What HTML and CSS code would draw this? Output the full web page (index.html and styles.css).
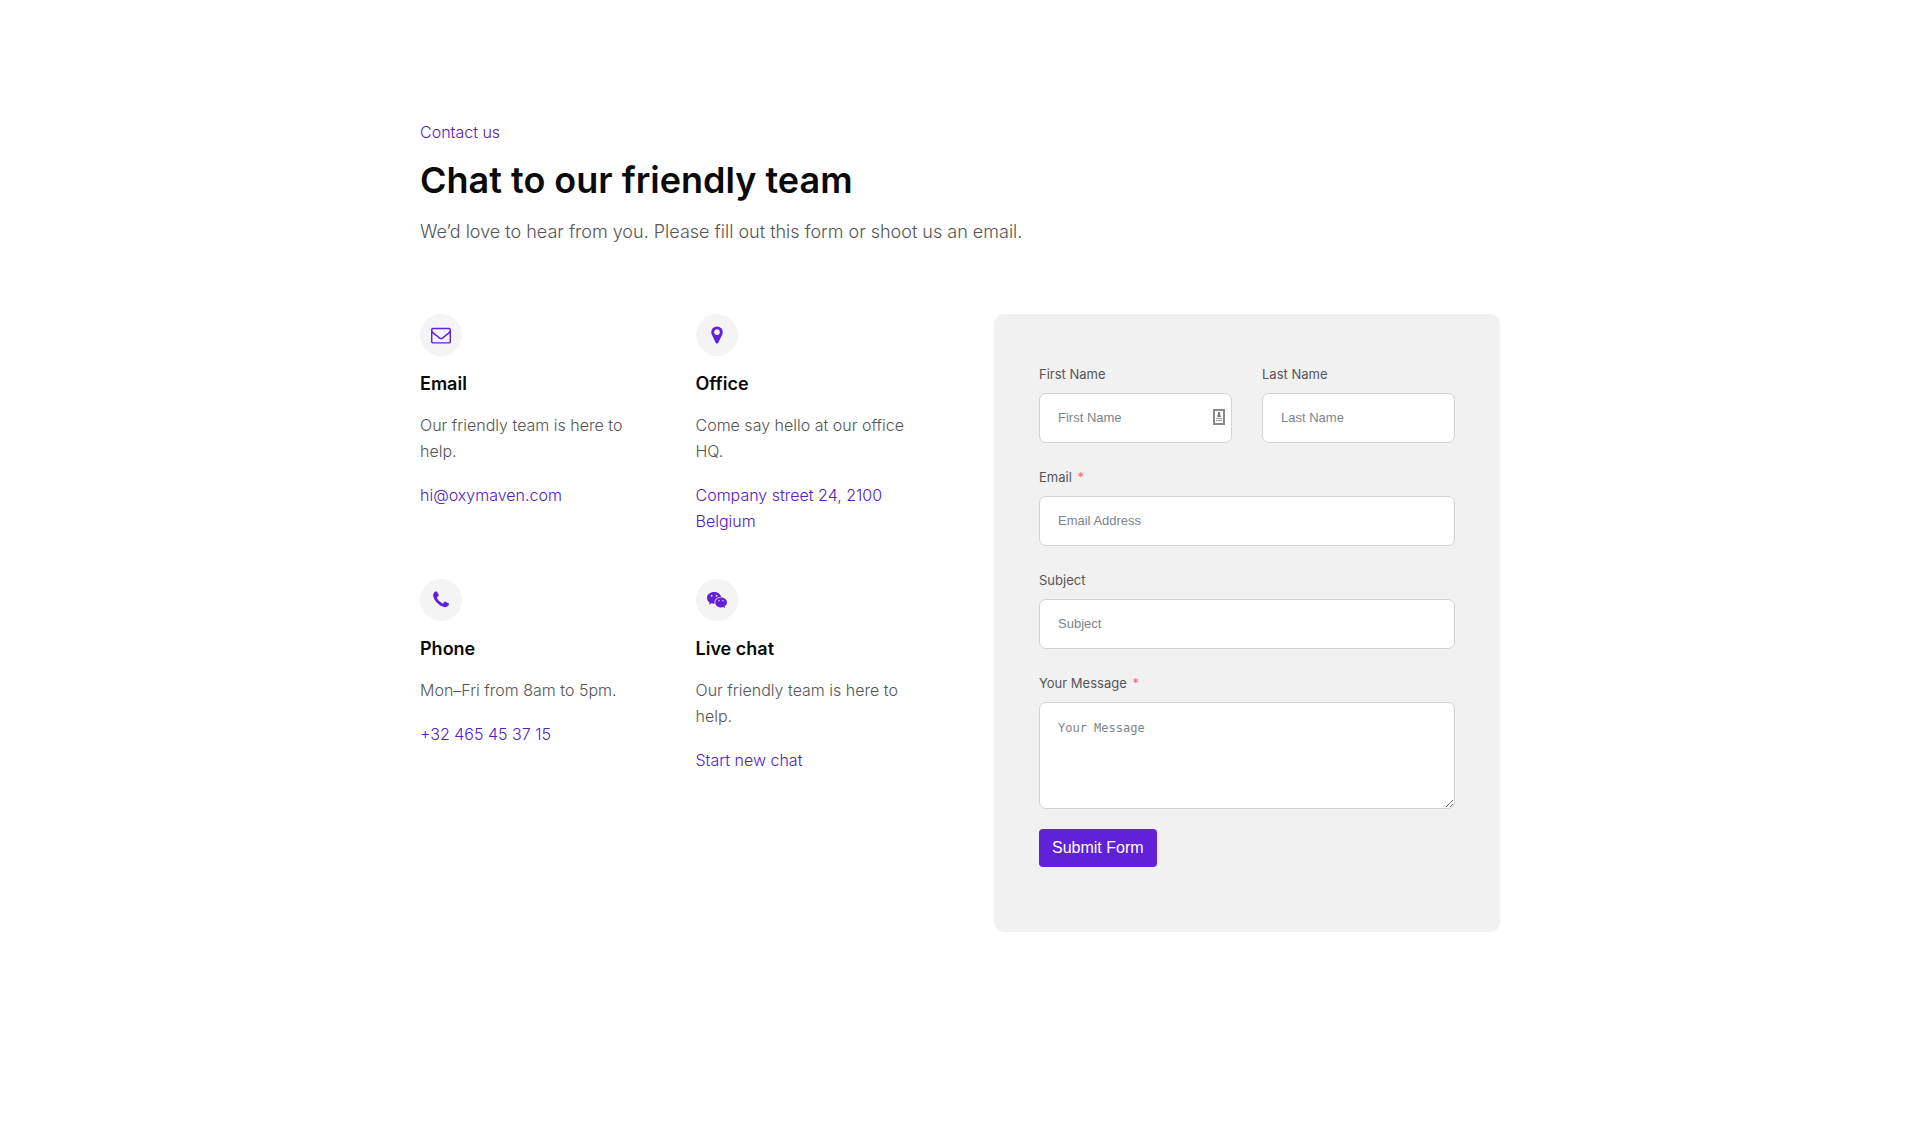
FILE: index.html
```html
<!DOCTYPE html>
<html lang="en">
<head>
<meta charset="utf-8">
<meta name="viewport" content="width=device-width, initial-scale=1">
<title>Contact us</title>
<link rel="stylesheet" href="styles.css">
</head>
<body>
<main class="container">
  <header class="intro">
    <p class="eyebrow">Contact us</p>
    <h1 class="title">Chat to our friendly team</h1>
    <p class="lead">We’d love to hear from you. Please fill out this form or shoot us an email.</p>
  </header>
  <div class="content">
    <section class="cards">
      <article class="card">
        <span class="icon"><svg viewBox="0 0 1792 1792" aria-hidden="true"><path d="M1664 1504v-768q-32 36-69 66-268 206-426 338-51 43-83 67t-86.5 48.5-102.5 24.5h-2q-48 0-102.5-24.5t-86.5-48.5-83-67q-158-132-426-338-37-30-69-66v768q0 13 9.5 22.5t22.5 9.5h1472q13 0 22.5-9.5t9.5-22.5zm0-1051v-24.5l-.5-13-3-12.5-5.5-9-9-7.5-14-2.5h-1472q-13 0-22.5 9.5t-9.5 22.5q0 168 147 284 193 152 401 317 6 5 35 29.5t46 37.5 44.5 31.5 50.5 27.5 43 9h2q20 0 43-9t50.5-27.5 44.5-31.5 46-37.5 35-29.5q208-165 401-317 54-43 100.5-115.5t46.5-131.5zm128-37v1088q0 66-47 113t-113 47h-1472q-66 0-113-47t-47-113v-1088q0-66 47-113t113-47h1472q66 0 113 47t47 113z"/></svg></span>
        <h2 class="card-title">Email</h2>
        <p class="card-text">Our friendly team is here to help.</p>
        <a class="card-link" href="mailto:hi@oxymaven.com">hi@oxymaven.com</a>
      </article>
      <article class="card">
        <span class="icon"><svg viewBox="0 0 1792 1792" aria-hidden="true"><path d="M1152 640q0-106-75-181t-181-75-181 75-75 181 75 181 181 75 181-75 75-181zm256 0q0 109-33 179l-364 774q-16 33-47.5 52t-67.5 19-67.5-19-46.5-52l-365-774q-33-70-33-179 0-212 150-362t362-150 362 150 150 362z"/></svg></span>
        <h2 class="card-title">Office</h2>
        <p class="card-text">Come say hello at our office HQ.</p>
        <a class="card-link" href="#office">Company street 24, 2100 Belgium</a>
      </article>
      <article class="card">
        <span class="icon"><svg viewBox="0 0 1792 1792" aria-hidden="true"><path d="M1600 1240q0 27-10 70.5t-21 68.5q-21 50-122 106-94 51-186 51-27 0-53-3.500t-57.500-12.500-47-14.500-55.500-20.500-49-18q-98-35-175-83-127-79-264-216t-216-264q-48-77-83-175-3-9-18-49t-20.500-55.500-14.500-47-12.500-57.500-3.500-53q0-92 51-186 56-101 106-122 25-11 68.500-21t70.500-10q14 0 21 3 18 6 53 76 11 19 30 54t35 63.500 31 53.500q3 4 17.500 25t21.500 35.500 7 28.500q0 20-28.500 50t-62 55-62 53-28.500 46q0 9 5 22.500t8.500 20.500 14 24 11.500 19q76 137 174 235t235 174q2 1 19 11.500t24 14 20.500 8.500 22.500 5q18 0 46-28.500t53-62 55-62 50-28.500q14 0 28.500 7t35.500 21.500 25 17.500q25 15 53.500 31t63.500 35 54 30q70 35 76 53 3 7 3 21z"/></svg></span>
        <h2 class="card-title">Phone</h2>
        <p class="card-text">Mon–Fri from 8am to 5pm.</p>
        <a class="card-link" href="tel:+32465453715">+32 465 45 37 15</a>
      </article>
      <article class="card">
        <span class="icon"><svg viewBox="0 0 20 20" aria-hidden="true"><path fill-rule="evenodd" d="M7 2C3.100 2 0 4.600 0 7.900c0 1.900 1 3.500 2.600 4.600L2 14.600l2.500-1.300c.9.200 1.600.4 2.500.4h.7a5.100 5.100 0 0 1-.2-1.400c0-3 2.600-5.400 5.900-5.400h.7C13.500 4 10.500 2 7 2zM4.700 4.900a.9.900 0 1 1 0 1.800.9.900 0 0 1 0-1.800zm4.900 0a.9.900 0 1 1 0 1.800.9.900 0 0 1 0-1.800z"/><path fill-rule="evenodd" d="M14.100 7.400c-3.300 0-5.900 2.200-5.900 5s2.600 5 5.900 5c.7 0 1.400-.2 2.100-.4l1.900 1.100-.5-1.800c1.400-1 2.400-2.400 2.400-3.900 0-2.700-2.700-5-5.900-5zm-2 2.700a.7.700 0 1 1 0 1.400.7.700 0 0 1 0-1.400zm3.900 0a.7.700 0 1 1 0 1.400.7.700 0 0 1 0-1.400z"/></svg></span>
        <h2 class="card-title">Live chat</h2>
        <p class="card-text">Our friendly team is here to help.</p>
        <a class="card-link" href="#chat">Start new chat</a>
      </article>
    </section>
    <form class="form">
      <div class="row">
        <div class="field">
          <label class="label" for="first">First Name</label>
          <div class="control">
            <input class="input" id="first" type="text" placeholder="First Name">
            <svg class="autofill" viewBox="0 0 12 16" aria-hidden="true"><rect x="1" y="1" width="10" height="14" fill="#fff" stroke="#8a8a8a" stroke-width="2"/><path d="M5 3h2v2l1 3H4l1-3z" fill="#777"/><path d="M3 9h6v1H3zM3 11h6v1H3z" fill="#999"/></svg>
          </div>
        </div>
        <div class="field">
          <label class="label" for="last">Last Name</label>
          <input class="input" id="last" type="text" placeholder="Last Name">
        </div>
      </div>
      <div class="field">
        <label class="label" for="email">Email <span class="required">*</span></label>
        <input class="input" id="email" type="email" placeholder="Email Address">
      </div>
      <div class="field">
        <label class="label" for="subject">Subject</label>
        <input class="input" id="subject" type="text" placeholder="Subject">
      </div>
      <div class="field">
        <label class="label" for="message">Your Message <span class="required">*</span></label>
        <textarea class="input message" id="message" placeholder="Your Message"></textarea>
      </div>
      <button class="submit" type="submit">Submit Form</button>
    </form>
  </div>
</main>
</body>
</html>
```
FILE: styles.css
```css
* {
  box-sizing: border-box;
}

body {
  margin: 0;
  background: #fff;
  color: #555;
  font-family: Inter, "Open Sans", sans-serif;
  font-size: 16px;
  font-weight: 300;
  line-height: 26px;
}

h1, h2, p {
  margin: 0;
}

.container {
  max-width: 1080px;
  margin: 0 auto;
  padding: 119px 0;
}

.intro {
  margin-bottom: 67px;
}

.eyebrow {
  color: #5320c0;
}

.title {
  margin: 11px 0 13px;
  color: #0a0a0a;
  font-size: 36px;
  font-weight: 600;
  line-height: 48px;
}

.lead {
  font-size: 18px;
  line-height: 30px;
}

.content {
  display: grid;
  grid-template-columns: 1fr 1fr;
  gap: 68px;
  align-items: start;
}

.cards {
  display: grid;
  grid-template-columns: 1fr 1fr;
  gap: 45px;
}

.card {
  display: flex;
  flex-direction: column;
  align-items: flex-start;
}

.icon {
  display: flex;
  align-items: center;
  justify-content: center;
  width: 42px;
  height: 42px;
  border-radius: 50%;
  background: #f4f4f4;
}

.icon svg {
  width: 20px;
  height: 20px;
  fill: #6121d8;
}

.card-title {
  margin: 15px 0;
  color: #0a0a0a;
  font-size: 18px;
  font-weight: 600;
  line-height: 26px;
}

.card-link {
  margin-top: 18px;
  color: #5320c0;
  text-decoration: none;
}

.form {
  padding: 50px 45px 65px;
  border-radius: 10px;
  background: #f1f1f1;
}

.row {
  display: grid;
  grid-template-columns: 1fr 1fr;
  gap: 30px;
}

.field {
  margin-bottom: 24px;
}

.field:last-of-type {
  margin-bottom: 20px;
}

.row .field {
  margin-bottom: 24px;
}

.label {
  display: block;
  margin-bottom: 9px;
  color: #555;
  font-size: 13px;
  font-weight: 400;
  line-height: 20px;
}

.required {
  margin-left: 2px;
  color: #f56c6c;
}

.control {
  position: relative;
}

.input {
  display: block;
  width: 100%;
  height: 50px;
  padding: 0 18px 2px;
  border: 1px solid #ced4da;
  border-radius: 7px;
  background: #fff;
  color: #444;
  font-family: "Liberation Sans", Arial, sans-serif;
  font-size: 13px;
}

.input::placeholder {
  color: #7c848c;
}

.autofill {
  position: absolute;
  top: 16px;
  right: 7px;
  width: 12px;
  height: 16px;
}

.message {
  height: 107px;
  padding: 16px 18px;
  font-family: "DejaVu Sans Mono", monospace;
  font-size: 12px;
  line-height: 18px;
  resize: vertical;
}

.submit {
  display: block;
  padding: 0 13px;
  border: 0;
  border-radius: 4px;
  background: #6121d8;
  color: #fff;
  font-family: "Liberation Sans", Arial, sans-serif;
  font-size: 16px;
  line-height: 38px;
}

@media (max-width: 1100px) {
  .container {
    padding: 60px 24px;
  }

  .content {
    grid-template-columns: 1fr;
  }
}
```
